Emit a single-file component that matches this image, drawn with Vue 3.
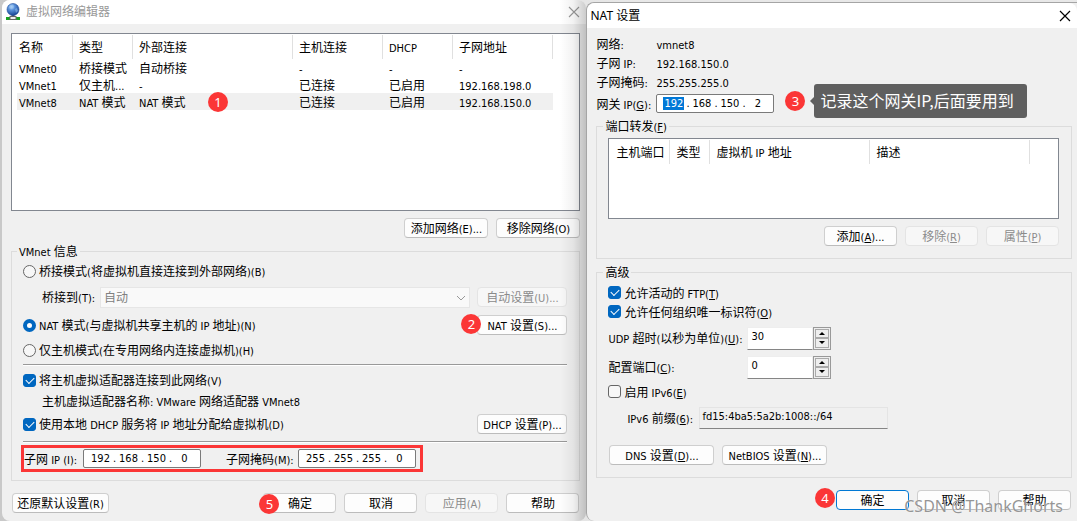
<script setup>
import { h, ref } from 'vue'

// Renders a caption: Latin runs use the small UI face, "_X" marks an access key.
const Cap = (props) =>
  h(
    'span',
    { class: 'cap' },
    props.t.split(/([\x20-\x7e]+)/).filter(Boolean).map((run) => {
      if (!/^[\x20-\x7e]/.test(run)) return run
      return h(
        'span',
        { class: 'latin' },
        run.split(/(_[A-Z0-9])/).filter(Boolean).map((s) => (/^_[A-Z0-9]$/.test(s) ? h('u', s[1]) : s))
      )
    })
  )
Cap.props = ['t']

const Octets = (props) =>
  h(
    'div',
    { class: 'ip', role: 'group', 'aria-label': props.name },
    props.v.flatMap((n, i) => [
      i ? h('span', { class: 'dot' }, '.') : null,
      h('input', {
        type: 'text',
        value: n,
        class: { picked: props.picked === i },
        'aria-label': `${props.name} ${i + 1}`
      })
    ])
  )
Octets.props = ['v', 'name', 'picked']

const heads = ['名称', '类型', '外部连接', '主机连接', 'DHCP', '子网地址']
const nets = [
  ['VMnet0', '桥接模式', '自动桥接', '-', '-', '-'],
  ['VMnet1', '仅主机...', '-', '已连接', '已启用', '192.168.198.0'],
  ['VMnet8', 'NAT 模式', 'NAT 模式', '已连接', '已启用', '192.168.150.0']
]
const info = [
  ['网络:', 'vmnet8'],
  ['子网 IP:', '192.168.150.0'],
  ['子网掩码:', '255.255.255.0']
]
const mode = ref('nat')
const udp = ref(30)
const port = ref(0)
</script>

<template>
  <main class="desk">
    <section class="win editor">
      <header class="title">
        <svg class="logo" width="16" height="18" viewBox="0 0 16 18">
          <defs>
            <radialGradient id="globe" cx="38%" cy="28%" r="75%">
              <stop offset="0" stop-color="#d5e8ff" />
              <stop offset=".35" stop-color="#5b93dc" />
              <stop offset="1" stop-color="#123f91" />
            </radialGradient>
          </defs>
          <path d="M8 11v4" stroke="#666" stroke-width="3" />
          <path d="M1 15.500h14" stroke="#18a020" stroke-width="3" />
          <rect x="5" y="13.500" width="6" height="3" fill="#eee" stroke="#666" />
          <circle cx="8" cy="6.500" r="6" fill="url(#globe)" stroke="#204f9c" stroke-width=".6" />
          <path d="M4 4q2-3 4-2l1 2-3 2zM10 6l2-1 1 3-2 2z" fill="#8fc0ee" opacity=".6" />
        </svg>
        <h1>虚拟网络编辑器</h1>
        <button class="close" aria-label="关闭">
          <svg width="12" height="12" viewBox="0 0 12 12"><path d="M1 1l10 10M11 1L1 11" stroke="currentColor" stroke-width="1.100" /></svg>
        </button>
      </header>

      <div class="body">
        <div class="list nets">
          <table>
            <colgroup><col class="c56" /><col class="c60" /><col class="c160" /><col class="c90" /><col class="c70" /><col class="c100" /></colgroup>
            <thead><tr><th v-for="t in heads" :key="t"><Cap :t="t" /></th></tr></thead>
            <tbody>
              <tr v-for="(r, i) in nets" :key="r[0]" :class="{ current: i === 2 }">
                <td v-for="(c, j) in r" :key="j"><Cap :t="c" /><span v-if="i === 2 && j === 2" class="badge one">1</span></td>
              </tr>
            </tbody>
          </table>
        </div>
        <div class="actions list-actions">
          <button class="btn w84"><Cap t="添加网络(E)..." /></button>
          <button class="btn w84"><Cap t="移除网络(O)" /></button>
        </div>

        <fieldset class="vmnet">
          <legend><Cap t="VMnet 信息" /></legend>
          <label class="row first"><input v-model="mode" type="radio" name="mode" value="bridge" /><Cap t="桥接模式(将虚拟机直接连接到外部网络)(B)" /></label>
          <div class="row bridge">
            <label for="bridged"><Cap t="桥接到(T):" /></label>
            <div class="combo">
              <select id="bridged" disabled><option>自动</option></select>
              <svg width="10" height="6" viewBox="0 0 10 6"><path d="M1 1l4 4 4-4" fill="none" stroke="#999" /></svg>
            </div>
            <button class="btn w89" disabled><Cap t="自动设置(U)..." /></button>
          </div>
          <div class="row between nat">
            <label><input v-model="mode" type="radio" name="mode" value="nat" /><Cap t="NAT 模式(与虚拟机共享主机的 IP 地址)(N)" /></label>
            <div class="anchor"><span class="badge two">2</span><button class="btn w89"><Cap t="NAT 设置(S)..." /></button></div>
          </div>
          <label class="row host"><input v-model="mode" type="radio" name="mode" value="host" /><Cap t="仅主机模式(在专用网络内连接虚拟机)(H)" /></label>
          <hr class="rule-a" />
          <label class="row adapter"><input type="checkbox" checked /><Cap t="将主机虚拟适配器连接到此网络(V)" /></label>
          <p class="row adapter-name"><Cap t="主机虚拟适配器名称: VMware 网络适配器 VMnet8" /></p>
          <div class="row between dhcp">
            <label><input type="checkbox" checked /><Cap t="使用本地 DHCP 服务将 IP 地址分配给虚拟机(D)" /></label>
            <button class="btn w89"><Cap t="DHCP 设置(P)..." /></button>
          </div>
          <hr class="rule-b" />
          <div class="subnet">
            <Cap class="sub-label" t="子网 IP (I):" />
            <Octets :v="['192', '168', '150', '0']" name="子网 IP" />
            <Cap class="mask-label" t="子网掩码(M):" />
            <Octets :v="['255', '255', '255', '0']" name="子网掩码" />
          </div>
        </fieldset>

        <footer class="actions editor-foot">
          <button class="btn w97"><Cap t="还原默认设置(R)" /></button>
          <div class="anchor push"><span class="badge five">5</span><button class="btn w73">确定</button></div>
          <button class="btn w73">取消</button>
          <button class="btn w73" disabled><Cap t="应用(A)" /></button>
          <button class="btn w73">帮助</button>
        </footer>
      </div>
    </section>

    <section class="win settings">
      <header class="title">
        <h2>NAT 设置</h2>
        <button class="close" aria-label="关闭">
          <svg width="12" height="12" viewBox="0 0 12 12"><path d="M1 1l10 10M11 1L1 11" stroke="currentColor" stroke-width="1.200" /></svg>
        </button>
      </header>
      <div class="body">
        <dl>
          <div v-for="r in info" :key="r[0]"><dt><Cap :t="r[0]" /></dt><dd><Cap :t="r[1]" /></dd></div>
        </dl>
        <div class="gateway">
          <Cap class="gate-label" t="网关 IP(_G):" />
          <Octets :v="['192', '168', '150', '2']" name="网关 IP" :picked="0" />
          <span class="badge three">3</span>
          <span class="note">记录这个网关IP,后面要用到</span>
        </div>

        <fieldset class="forward">
          <legend><Cap t="端口转发(_F)" /></legend>
          <div class="list ports">
            <table>
              <colgroup><col class="c56" /><col class="c40" /><col class="c160" /><col class="c160" /></colgroup>
              <thead><tr><th>主机端口</th><th>类型</th><th><Cap t="虚拟机 IP 地址" /></th><th>描述</th></tr></thead>
            </table>
          </div>
          <div class="actions port-actions">
            <button class="btn w73"><Cap t="添加(_A)..." /></button>
            <button class="btn w73" disabled><Cap t="移除(_R)" /></button>
            <button class="btn w73" disabled><Cap t="属性(_P)" /></button>
          </div>
        </fieldset>

        <fieldset class="advanced">
          <legend>高级</legend>
          <label class="check"><input type="checkbox" checked /><Cap t="允许活动的 FTP(_T)" /></label>
          <label class="check"><input type="checkbox" checked /><Cap t="允许任何组织唯一标识符(_O)" /></label>
          <div class="field udp">
            <label for="udp"><Cap t="UDP 超时(以秒为单位)(_U):" /></label>
            <div class="spin">
              <input id="udp" v-model="udp" type="text" />
              <div class="steps"><button aria-label="增加" @click="udp++"><i class="up"></i></button><button aria-label="减少" @click="udp--"><i class="down"></i></button></div>
            </div>
          </div>
          <div class="field">
            <label for="port"><Cap t="配置端口(_C):" /></label>
            <div class="spin">
              <input id="port" v-model="port" type="text" />
              <div class="steps"><button aria-label="增加" @click="port++"><i class="up"></i></button><button aria-label="减少" @click="port--"><i class="down"></i></button></div>
            </div>
          </div>
          <label class="check v6"><input type="checkbox" /><Cap t="启用 IPv6(_E)" /></label>
          <div class="prefix">
            <label for="prefix"><Cap t="IPv6 前缀(_6):" /></label>
            <input id="prefix" type="text" value="fd15:4ba5:5a2b:1008::/64" readonly />
          </div>
          <div class="more">
            <button class="btn w105"><Cap t="DNS 设置(_D)..." /></button>
            <button class="btn w105"><Cap t="NetBIOS 设置(_N)..." /></button>
          </div>
        </fieldset>

        <footer class="actions settings-foot">
          <div class="anchor"><span class="badge four">4</span><button class="btn w73 default">确定</button></div>
          <button class="btn w73">取消</button>
          <button class="btn w73">帮助</button>
        </footer>
      </div>
      <span class="mark">CSDN @ThankGhorts</span>
    </section>
  </main>
</template>

<style>
body { margin: 0; background: #d6d6d6; }
.latin { font-family: "DejaVu Sans Condensed", "DejaVu Sans", sans-serif; font-size: 11px; line-height: 12px; white-space: pre; }
.cap { white-space: nowrap; }
.ip { display: flex; align-items: center; box-sizing: border-box; width: 118px; height: 19px; padding: 0 4px; background: #fff; border: 1px solid #7a7a7a; border-radius: 2px; font: 11px/13px "DejaVu Sans Condensed", "DejaVu Sans", sans-serif; }
.ip input { box-sizing: border-box; width: 25px; height: 13px; padding: 0; border: 0; background: none; text-align: center; font: inherit; color: #000; outline: 0; }
.ip input.picked { width: 21px; margin: 0 2px; background: #0078d7; color: #fff; }
.ip .dot { width: 3px; }
</style>

<style scoped>
.desk { display: flex; min-height: 100vh; overflow: hidden; font: 12px/16px "Noto Sans CJK SC", sans-serif; color: #000; background: linear-gradient(90deg, #c9c9c9, #e8e8e8 60%); }
.desk * { box-sizing: border-box; }
.win { position: relative; display: flex; flex-direction: column; background: #f0f0f0; }
.editor { flex: 585 1 0; margin-left: 2px; border-radius: 8px; }
.editor::after { content: ""; position: absolute; inset: 0 0 0 auto; width: 26px; background: linear-gradient(90deg, transparent, rgba(0, 0, 0, .05) 50%, rgba(0, 0, 0, .2)); pointer-events: none; border-radius: 0 8px 8px 0; }
.settings { flex: 490 1 0; margin-top: 2px; border: 1px solid #a5a5a5; border-right: 0; border-bottom: 0; border-radius: 8px 0 0 8px; }
.title { display: flex; align-items: center; height: 24px; background: #fff; border-radius: 8px 8px 0 0; }
.settings .title { height: 25px; padding: 0 6px 0 3px; }
.editor .title { padding: 0 6px 0 3px; color: #999; }
.title h1, .title h2 { flex: 1; margin: 0; font: 12px/18px "Noto Sans", "Noto Sans CJK SC", sans-serif; }
.logo { margin: 0 5px 1px 0; }
.close { display: flex; padding: 0; border: 0; background: none; color: inherit; }
.body { padding: 9px 6px 8px 9px; }
.settings .body { padding: 6px 5px 8px 9px; }
.list { background: #fff; border: 1px solid #828790; overflow: hidden; }
.nets { min-height: 178px; padding: 1px 0 0 5px; }
.ports { min-height: 81px; padding: 1px 0 0 5px; }
table { border-collapse: separate; border-spacing: 0; table-layout: fixed; width: 536px; }
.ports table { width: 416px; }
.c40 { width: 40px; } .c56 { width: 56px; } .c60 { width: 60px; } .c70 { width: 70px; } .c90 { width: 90px; } .c100 { width: 100px; } .c160 { width: 160px; }
th { height: 24px; padding: 0 0 0 6px; border-right: 1px solid #e0e0e0; text-align: left; font-weight: 400; white-space: nowrap; }
td { position: relative; height: 17px; padding: 0 0 0 6px; line-height: 16px; white-space: nowrap; }
th:first-child, td:first-child { padding-left: 2px; }
tbody .current { background: #f0f0f0; }
.actions { display: flex; justify-content: flex-end; gap: 8px; }
.list-actions { margin-top: 7px; }
.btn { height: 20px; padding: 0; border: 1px solid #cfcfcf; border-bottom-color: #bcbcbc; border-radius: 4px; background: #fdfdfd; font: inherit; line-height: 16px; color: #000; white-space: nowrap; }
.btn:disabled { background: #f7f7f7; border-color: #e4e4e4; color: #8b8b8b; }
.btn.default { border: 1px solid #0078d4; }
.w73 { width: 73px; } .w84 { width: 84px; } .w89 { width: 90px; } .w97 { width: 97px; } .w105 { width: 105px; }
fieldset { min-width: 0; margin: 0; border: 1px solid #dcdcdc; }
legend { height: 16px; padding: 0 2px; }
.vmnet { margin-top: 5px; padding: 0 12px 8px 11px; }
.vmnet legend { margin-left: -6px; }
.row, .row label { display: flex; align-items: center; }
.row { height: 20px; margin: 0; }
.between { justify-content: space-between; }
.first { margin-top: 2px; }
.bridge { margin-top: 6px; padding-left: 19px; }
.bridge label { width: 58px; }
.combo { position: relative; flex: 1; margin-right: 7px; }
.combo select { display: block; width: 100%; height: 21px; padding: 0 3px; appearance: none; border: 1px solid #e6e6e6; background: #f9f9f9; color: #808080; font: inherit; opacity: 1; }
.combo svg { position: absolute; right: 4px; top: 8px; }
.nat { margin-top: 8px; }
.host { margin-top: 5px; }
hr { height: 2px; margin: 0; border: 0; border-top: 1px solid #999; background: #fff; }
.rule-a { margin-top: 4px; }
.adapter { margin-top: 4px; }
.adapter-name { margin-top: 1px; padding-left: 19px; }
.dhcp { margin-top: 3px; }
.rule-b { margin-top: 7px; }
.subnet { display: flex; align-items: center; width: 402px; height: 27px; margin: 2px 0 0 -2px; border: 3px solid #fb3636; }
.sub-label { width: 59px; }
.mask-label { width: 72px; margin-left: 25px; }
input[type="radio"], input[type="checkbox"] { position: relative; flex: none; width: 13px; height: 13px; margin: 0 3px 0 0; appearance: none; border: 1px solid #666; background: #f7f7f7; }
input[type="radio"] { border-radius: 50%; }
input[type="checkbox"] { border-radius: 3px; }
input[type="radio"]:checked { border: 4px solid #0067c0; background: #fff; }
input[type="checkbox"]:checked { border-color: #0067c0; background: #0067c0; }
input[type="checkbox"]:checked::after { content: ""; position: absolute; left: 2px; top: 2px; width: 7px; height: 4px; border: solid #fff; border-width: 0 0 1px 1px; transform: rotate(-45deg); }
.editor-foot { margin-top: 12px; padding: 0 1px; }
.push { margin-left: auto; }
.anchor { position: relative; display: flex; }
.badge { position: absolute; z-index: 2; width: 20px; height: 20px; border-radius: 50%; background: #fb3636; color: #fff; text-align: center; font: 13px/20px "Noto Sans", sans-serif; }
.one { left: 75px; top: -1px; }
.two { left: -16px; top: -1px; }
.five { left: -4px; top: 1px; }
.four { left: -21px; top: -2px; }
dl { margin: 0; }
dl div { display: flex; height: 19px; align-items: center; }
dt { width: 60px; }
dd { margin: 0; }
.gateway { display: flex; align-items: center; height: 19px; margin-top: 3px; }
.gate-label { width: 60px; }
.three { position: static; margin: -5px 9px 0 11px; }
.note { position: relative; height: 34px; margin: -8px 0 -2px; padding: 0 6px; border-radius: 3px; background: #5f5f5f; color: #fff; font-size: 16px; line-height: 33px; white-space: nowrap; width: 213px; }
.note::before { content: ""; position: absolute; left: -4px; top: 13px; border: solid transparent; border-width: 4px 4px 4px 0; border-right-color: #5f5f5f; }
.forward { margin-top: 5px; padding: 4px 12px 12px 11px; }
.forward legend, .advanced legend { margin-left: -5px; }
.port-actions { margin-top: 7px; }
.advanced { margin-top: 5px; padding: 3px 11px 12px; }
.check { display: flex; align-items: center; height: 19px; }
.field { display: flex; align-items: center; height: 22px; margin-top: 7px; }
.udp { margin-top: 6px; }
.field label { width: 139px; }
.spin { display: flex; width: 84px; height: 23px; }
.spin input { flex: 1; min-width: 0; padding: 0 3px 3px; border: 1px solid #eee; border-bottom-color: #858585; background: #fff; font: 11px/16px "DejaVu Sans Condensed", sans-serif; }
.steps { display: flex; flex-direction: column; width: 18px; padding: 1px; border: 1px solid #999; background: #eee; }
.steps button { flex: 1; display: flex; align-items: center; justify-content: center; padding: 0; border: 1px solid #aaa; background: #eee; }
.steps i { border: solid transparent; border-width: 0 3px; }
.steps .up { border-bottom: 3px solid #000; }
.steps .down { border-top: 3px solid #000; }
.v6 { margin-top: 4px; }
.prefix { display: flex; align-items: center; margin-top: 6px; padding-left: 19px; }
.prefix label { width: 72px; }
.prefix input { width: 189px; height: 22px; padding: 0 2px 3px; border: 1px solid #e4e4e4; border-bottom-color: #858585; background: #f0f0f0; font: 11px/16px "DejaVu Sans Condensed", sans-serif; }
.more { display: flex; gap: 8px; margin: 16px 0 0 1px; }
.settings-foot { margin-top: 12px; padding-right: 1px; }
.mark { position: absolute; right: 14px; bottom: 4px; z-index: 3; color: rgba(130, 130, 130, .85); text-shadow: 0 0 1px #fff; font: 16px/22px "Noto Sans", sans-serif; white-space: nowrap; pointer-events: none; }
</style>
